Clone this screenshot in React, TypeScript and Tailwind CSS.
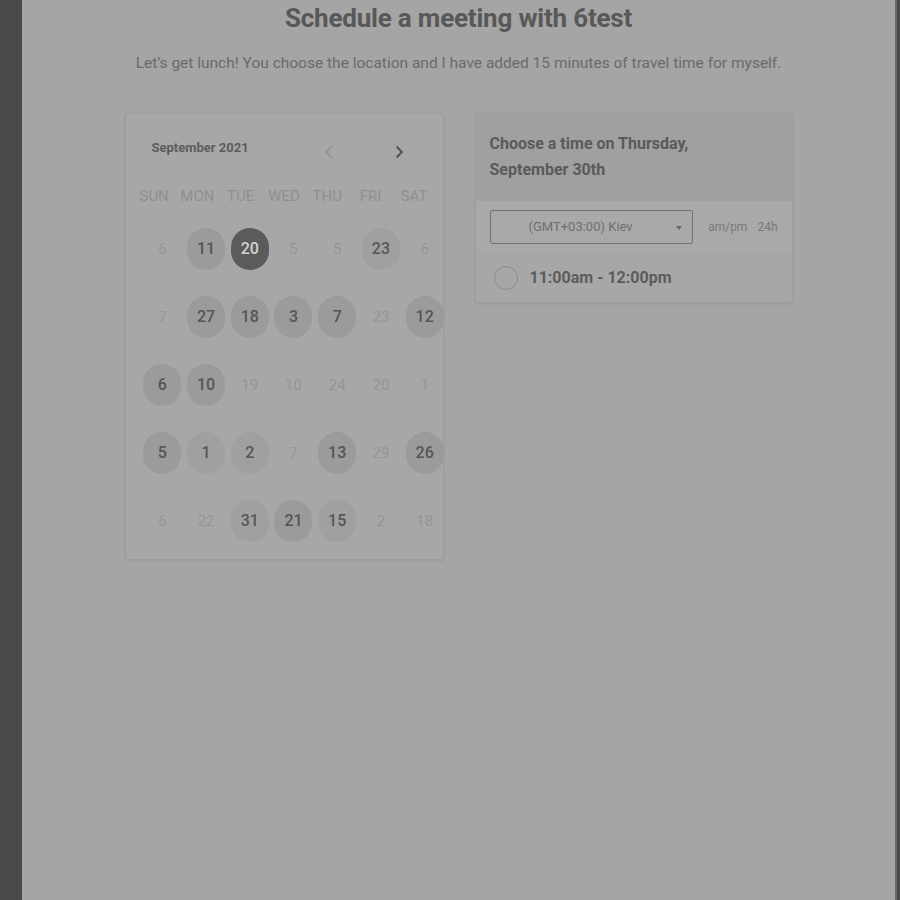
import React from 'react';

type Day = { n: number; kind: 'off' | 'on' | 'dim' | 'sel' };

const rows: Day[][] = [
  [
    { n: 6, kind: 'off' },
    { n: 11, kind: 'on' },
    { n: 20, kind: 'sel' },
    { n: 5, kind: 'off' },
    { n: 5, kind: 'off' },
    { n: 23, kind: 'dim' },
    { n: 6, kind: 'off' },
  ],
  [
    { n: 7, kind: 'off' },
    { n: 27, kind: 'on' },
    { n: 18, kind: 'on' },
    { n: 3, kind: 'on' },
    { n: 7, kind: 'on' },
    { n: 23, kind: 'off' },
    { n: 12, kind: 'on' },
  ],
  [
    { n: 6, kind: 'on' },
    { n: 10, kind: 'on' },
    { n: 19, kind: 'off' },
    { n: 10, kind: 'off' },
    { n: 24, kind: 'off' },
    { n: 20, kind: 'off' },
    { n: 1, kind: 'off' },
  ],
  [
    { n: 5, kind: 'on' },
    { n: 1, kind: 'dim' },
    { n: 2, kind: 'dim' },
    { n: 7, kind: 'off' },
    { n: 13, kind: 'on' },
    { n: 29, kind: 'off' },
    { n: 26, kind: 'on' },
  ],
  [
    { n: 6, kind: 'off' },
    { n: 22, kind: 'off' },
    { n: 31, kind: 'dim' },
    { n: 21, kind: 'on' },
    { n: 15, kind: 'dim' },
    { n: 2, kind: 'off' },
    { n: 18, kind: 'off' },
  ],
];

const weekdays = ['SUN', 'MON', 'TUE', 'WED', 'THU', 'FRI', 'SAT'];

const DayCell: React.FC<{ day: Day }> = ({ day }) => {
  if (day.kind === 'off') {
    return (
      <div className="flex items-center justify-center h-[68px] text-[15px] text-[#959595]">
        {day.n}
      </div>
    );
  }
  const circle =
    day.kind === 'sel'
      ? 'bg-[#5b5b5b] text-[#d2d2d2]'
      : day.kind === 'dim'
        ? 'bg-[#a0a0a0] text-[#565656]'
        : 'bg-[#9b9b9b] text-[#555555]';
  return (
    <div className="flex items-center justify-center h-[68px]">
      <div className={`flex items-center justify-center w-[38px] h-[42px] rounded-full text-[16px] font-medium ${circle}`}>
        {day.n}
      </div>
    </div>
  );
};

const Calendar: React.FC = () => (
  <div className="w-[319px] h-[447px] bg-[#a7a7a7] border border-[#9d9d9d] rounded-[3px] shadow-[0_1px_3px_rgba(0,0,0,0.08)]">
    <div className="flex items-center h-[67px] pl-[26px]">
      <span className="w-[150px] text-[13px] font-bold text-[#5c5c5c]">September 2021</span>
      <div className="flex items-center mt-[8px] ml-[22px] gap-[62px]">
        <svg width="9" height="14" viewBox="0 0 9 14" fill="none">
          <path d="M7.5 1.5 L2 7 L7.5 12.5" stroke="#8f8f8f" strokeWidth="1.6" />
        </svg>
        <svg width="9" height="14" viewBox="0 0 9 14" fill="none">
          <path d="M1.5 1.5 L7 7 L1.5 12.5" stroke="#555555" strokeWidth="2" />
        </svg>
      </div>
    </div>
    <div className="grid grid-cols-7 w-[303px] ml-[7px] h-[30px] items-center">
      {weekdays.map((w) => (
        <div key={w} className="text-center text-[15px] text-[#8f8f8f]">
          {w}
        </div>
      ))}
    </div>
    <div className="grid grid-cols-7 w-[306px] ml-[15px] mt-[4px]">
      {rows.flat().map((d, i) => (
        <DayCell key={i} day={d} />
      ))}
    </div>
  </div>
);

const TimePicker: React.FC = () => (
  <div className="w-[318px] bg-[#a7a7a7] border border-[#9d9d9d] rounded-[3px] shadow-[0_1px_3px_rgba(0,0,0,0.08)] overflow-hidden">
    <div className="flex items-center h-[88px] px-[14px] bg-[#a0a0a0]">
      <p className="text-[16px] leading-[26px] font-bold text-[#5a5a5a]">
        Choose a time on Thursday,
        <br />
        September 30th
      </p>
    </div>
    <div className="flex items-center h-[51px] px-[14px] bg-[#a9a9a9]">
      <div className="relative flex items-center w-[204px] h-[34px] border border-[#727272] rounded-[2px] pl-[38px] text-[13px] text-[#6f6f6f]">
        (GMT+03:00) Kiev
        <span className="absolute right-[10px] top-[15px] w-0 h-0 border-l-[3.5px] border-r-[3.5px] border-t-[4px] border-l-transparent border-r-transparent border-t-[#666666]" />
      </div>
      <span className="ml-[15px] text-[12px] text-[#7a7a7a]">am/pm</span>
      <span className="ml-[10px] text-[12px] text-[#7a7a7a]">24h</span>
    </div>
    <div className="flex items-center h-[50px] px-[18px] border-t border-[#a2a2a2]">
      <div className="w-[24px] h-[24px] rounded-full border-[1.5px] border-[#8a8a8a]" />
      <span className="ml-[12px] text-[16px] font-bold text-[#5c5c5c]">11:00am - 12:00pm</span>
    </div>
  </div>
);

export default function App() {
  return (
    <div className="flex w-[900px] h-[900px] bg-[#494949] overflow-hidden" style={{ fontFamily: 'Roboto, "Liberation Sans", sans-serif' }}>
      <div className="w-[22px] shrink-0" />
      <main className="flex-1 flex flex-col items-center bg-[#a5a5a5] border-r-2 border-[#6c6c6c]">
        <h1 className="mt-[4px] text-[26px] leading-[28px] font-bold text-[#585858] tracking-[-0.2px]">
          Schedule a meeting with 6test
        </h1>
        <p className="mt-[22px] text-[15.5px] leading-[18px] text-[#6a6a6a]">
          Let’s get lunch! You choose the location and I have added 15 minutes of travel time for myself.
        </p>
        <div className="flex items-start gap-[31px] mt-[41px]">
          <Calendar />
          <div className="-mt-[1px]">
            <TimePicker />
          </div>
        </div>
      </main>
      <div className="w-[3px] shrink-0" />
    </div>
  );
}
